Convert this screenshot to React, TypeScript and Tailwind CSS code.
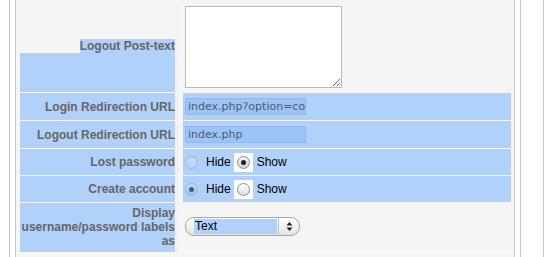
const BLUE = 'bg-[#b0d1f9]'

function Label({ children, className = '' }: { children: React.ReactNode; className?: string }) {
  return (
    <div
      className={`flex w-[155px] shrink-0 items-center justify-end text-right font-['Liberation_Sans',Arial,sans-serif] text-[12px] font-bold leading-[14px] text-[#666] ${BLUE} ${className}`}
    >
      {children}
    </div>
  )
}

function Gap() {
  return (
    <div className="flex w-[8px] shrink-0">
      <div className="ml-[2px] w-px bg-[#ebebeb]" />
    </div>
  )
}

function Radio({ checked, tinted }: { checked: boolean; tinted: boolean }) {
  const ring = tinted ? 'border-[#9ab6d8]' : 'border-[#8e8e8e]'
  const fill = tinted
    ? checked
      ? 'bg-gradient-to-b from-[#c4dcfa] to-[#9cc3f2]'
      : 'bg-gradient-to-b from-[#c6dcf8] to-[#b6d2f6]'
    : checked
      ? 'bg-gradient-to-b from-[#f4f4f4] to-[#d4d4d4]'
      : 'bg-gradient-to-b from-[#ffffff] to-[#dedede]'
  return (
    <span className={`flex h-[13px] w-[13px] items-center justify-center rounded-full border ${ring} ${fill}`}>
      {checked && (
        <span className={`h-[5px] w-[5px] rounded-full ${tinted ? 'bg-[#3a5f90]' : 'bg-[#1e1e1e]'}`} />
      )}
    </span>
  )
}

function RadioPair({ show }: { show: boolean }) {
  return (
    <div className="flex items-center pl-[2px] font-['Liberation_Sans',Arial,sans-serif] text-[12px] text-black">
      <Radio checked={!show} tinted />
      <span className="ml-[8px]">Hide</span>
      <span className="ml-[3px] flex h-[19px] w-[19px] items-center justify-center bg-white">
        <Radio checked={show} tinted={false} />
      </span>
      <span className="ml-[4px]">Show</span>
    </div>
  )
}

function UrlInput({ value }: { value: string }) {
  return (
    <input
      readOnly
      value={value}
      className="ml-[2px] h-[17px] w-[121px] border border-[#8fb9ec] bg-[#9cc5f6] pl-[2px] font-['DejaVu_Sans',sans-serif] text-[11px] text-[#4f5b6b] outline-none"
    />
  )
}

export default function App() {
  return (
    <div className="flex h-[257px] w-[544px] overflow-hidden bg-white">
      <div className="w-[9px] shrink-0" />
      <div className="flex w-[512px] shrink-0 border-x border-[#c8c8c8] bg-white px-[5px]">
        <div className="flex-1 border-x border-[#c8c8c8] bg-[#f5f5f5] pl-[4px] pr-[3px] pt-[4px]">
          <div className="flex flex-col gap-[1px]">
            {/* Logout Post-text */}
            <div className="flex h-[88px]">
              <div className="flex w-[155px] shrink-0 flex-col font-['Liberation_Sans',Arial,sans-serif] text-[12px] font-bold leading-[14px] text-[#666]">
                <div className="h-[35px]" />
                <div className="text-right">
                  <span className={BLUE}>Logout Post-text</span>
                </div>
                <div className={`flex-1 ${BLUE}`} />
              </div>
              <Gap />
              <div className="flex-1 pl-[2px] pt-[2px]">
                <textarea
                  readOnly
                  className="block h-[82px] w-[157px] resize border border-[#b9b9b9] bg-white"
                />
              </div>
            </div>

            <div className="flex h-[27px]">
              <Label>Login Redirection URL</Label>
              <Gap />
              <div className={`flex flex-1 items-center ${BLUE}`}>
                <UrlInput value="index.php?option=com_user" />
              </div>
            </div>

            <div className="flex h-[27px]">
              <Label>Logout Redirection URL</Label>
              <Gap />
              <div className={`flex flex-1 items-center ${BLUE}`}>
                <UrlInput value="index.php" />
              </div>
            </div>

            <div className="flex h-[26px]">
              <Label>Lost password</Label>
              <Gap />
              <div className={`flex flex-1 items-center ${BLUE}`}>
                <RadioPair show />
              </div>
            </div>

            <div className="flex h-[26px]">
              <Label>Create account</Label>
              <Gap />
              <div className={`flex flex-1 items-center ${BLUE}`}>
                <RadioPair show={false} />
              </div>
            </div>

            <div className="flex h-[50px] border-b border-[#fbfbfb]">
              <Label className="pb-[1px]">
                <span>
                  Display
                  <br />
                  username/password labels
                  <br />
                  as
                </span>
              </Label>
              <Gap />
              <div className="flex flex-1 items-center pl-[2px] pb-[3px]">
                <div className="flex h-[19px] w-[115px] items-center rounded-[9px] border border-[#a5a5a5] bg-gradient-to-b from-white to-[#e4e4e4] shadow-[inset_0_1px_0_#fff]">
                  <div className="ml-[8px] flex h-[15px] w-[83px] items-center bg-[#b0d1f9] pl-[1px] font-['Liberation_Sans',Arial,sans-serif] text-[12px] text-black">
                    Text
                  </div>
                  <div className="ml-[1px] h-full w-px bg-[#c4c4c4]" />
                  <div className="flex flex-1 items-center justify-center">
                    <svg width="7" height="11" viewBox="0 0 7 11">
                      <path d="M3.5 1 L6.5 4.5 L0.5 4.5 Z" fill="#222" />
                      <path d="M3.5 10 L6.5 6.5 L0.5 6.5 Z" fill="#222" />
                    </svg>
                  </div>
                </div>
              </div>
            </div>
          </div>
        </div>
      </div>
      <div className="w-[22px] shrink-0" />
      <div className="w-px shrink-0 bg-[#c8c8c8]" />
    </div>
  )
}
